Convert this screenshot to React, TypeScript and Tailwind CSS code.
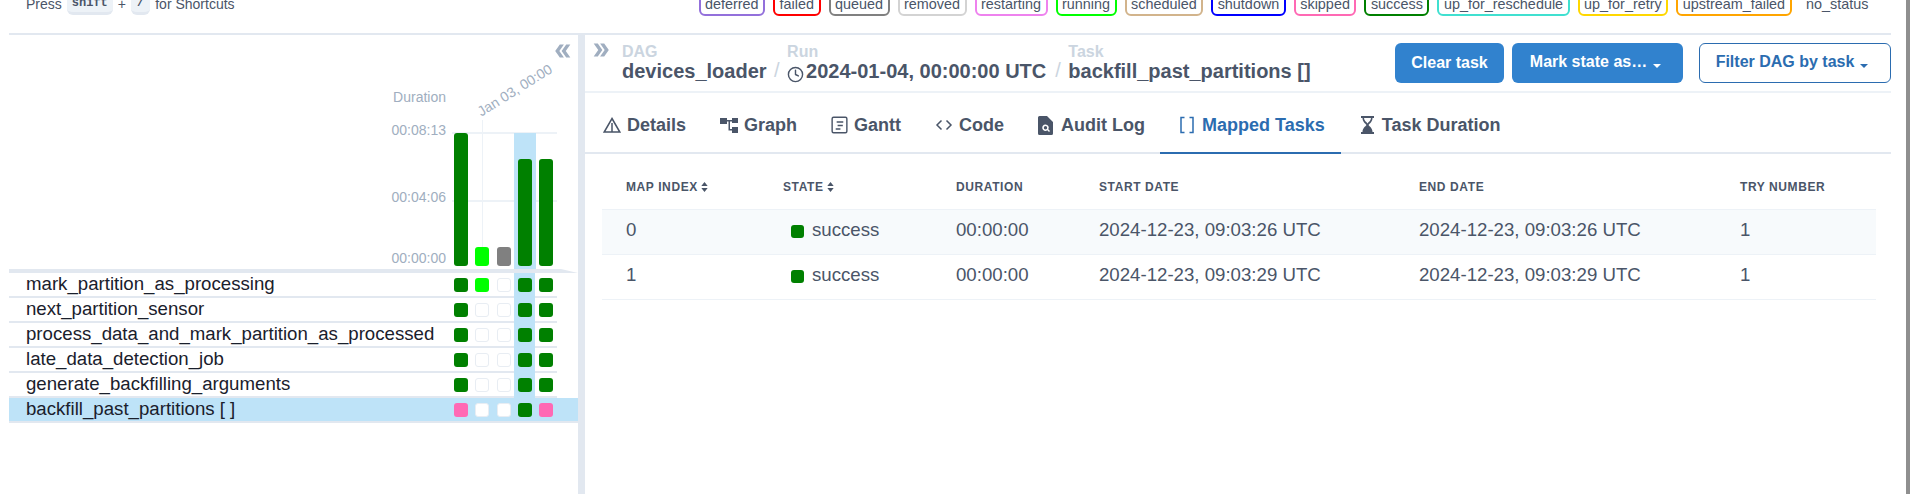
import React from "react";
import { MdDoubleArrow } from "react-icons/md";
import { FiClock } from "react-icons/fi";

const font = "font-['Liberation_Sans',Arial,sans-serif]";
const legend = [
  ["deferred", "border-[#9370db]"], ["failed", "border-[#ff0000]"], ["queued", "border-[#808080]"],
  ["removed", "border-[#d3d3d3]"], ["restarting", "border-[#ee82ee]"], ["running", "border-[#00ff00]"],
  ["scheduled", "border-[#d2b48c]"], ["shutdown", "border-[#0000ff]"], ["skipped", "border-[#ff69b4]"],
  ["success", "border-[#008000]"], ["up_for_reschedule", "border-[#40e0d0]"], ["up_for_retry", "border-[#ffd700]"],
  ["upstream_failed", "border-[#ffa500]"], ["no_status", "border-transparent"],
];
const G = "bg-[#008000]"; const L = "bg-[#00ff00]"; const E = "bg-white border border-[#e8edf3]"; const P = "bg-[#ff69b4]";
const rows: [string, string[]][] = [
  ["mark_partition_as_processing", [G, L, E, G, G]],
  ["next_partition_sensor", [G, E, E, G, G]],
  ["process_data_and_mark_partition_as_processed", [G, E, E, G, G]],
  ["late_data_detection_job", [G, E, E, G, G]],
  ["generate_backfilling_arguments", [G, E, E, G, G]],
  ["backfill_past_partitions [ ]", [P, E, E, G, P]],
];
const bars = [["h-[133px]", G], ["h-[19px]", L], ["h-[19px]", "bg-[#808080]"], ["h-[107px]", G], ["h-[107px]", G]];

function Caret() {
  return <span className="ml-[6px] inline-block w-0 h-0 border-x-[4px] border-x-transparent border-t-[4px] border-t-current translate-y-[1px]" />;
}
function Tab({ icon, label, active, cls }: { icon: React.ReactNode; label: string; active?: boolean; cls?: string }) {
  return (
    <div className={`flex items-center gap-[6px] h-[61px] pt-[5px] border-b-2 font-bold text-[18px] ${active ? "border-[#2b6cb0] text-[#2b6cb0]" : "border-transparent text-[#4a5568]"} ${cls ?? "px-4"}`}>
      {icon}
      <span>{label}</span>
    </div>
  );
}
function Crumb({ label, children }: { label: string; children: React.ReactNode }) {
  return (
    <div className="flex flex-col">
      <span className="text-base leading-[18px] font-bold text-[#cbd5e0] translate-y-[1px]">{label}</span>
      <span className="text-xl leading-[24px] font-bold text-[#4a5568] flex items-center -translate-y-[1px]">{children}</span>
    </div>
  );
}
function Sort() {
  return (
    <svg width="7" height="10" viewBox="0 0 7 11" className="inline-block ml-[3px] align-[-1px]" fill="#4a5568">
      <path d="M3.5 0 7 4.4H0zM3.5 11 0 6.6h7z" />
    </svg>
  );
}
const th = "px-6 pt-[11px] text-left text-xs font-bold tracking-[0.6px] text-[#4a5568] uppercase";
const td = "px-6 pb-[3px] text-[18.65px] text-[#4a5568]";
const kbd = "mx-[5px] h-[24px] pt-[3px] flex items-center rounded-md bg-[#edf2f7] border-b-[3px] border-[#e2e8f0] font-['Liberation_Mono',monospace] font-bold text-xs";

export default function App() {
  return (
    <div className={`${font} relative w-[1910px] h-[494px] overflow-hidden bg-white text-[#4a5568]`}>
      <div className="absolute right-0 top-0 w-[4px] h-[494px] bg-[#8f8f8f]" />
      <div className="mx-[9px] w-[1882px] h-[494px] flex flex-col">
        <div className="h-[33px] shrink-0 flex items-end justify-between pb-[17px] pl-[17px] pr-[16px]">
          <div className="flex items-center text-sm leading-5 mb-[1px]">
            <span className="translate-y-[1px]">Press</span>
            <kbd className={`${kbd} px-[5px]`}>shift</kbd>
            <span className="translate-y-[1px]">+</span>
            <kbd className={`${kbd} px-[6px]`}>/</kbd>
            <span className="translate-y-[1px]">for Shortcuts</span>
          </div>
          <div className="flex items-end gap-2">
            {legend.map(([t, c]) => (
              <div key={t} className={`h-[24px] pt-[1px] flex items-center px-[4.5px] border-2 rounded-md text-[14.4px] ${c}`}>{t}</div>
            ))}
          </div>
        </div>
        <div className="flex-1 flex border-t-2 border-[#e2e8f0] min-h-0">
          <div className="w-[569px] shrink-0 flex flex-col">
            <div className="relative h-[234px] shrink-0">
              <MdDoubleArrow className="absolute left-[543px] top-[5px] rotate-180 text-[#a0aec0]" size={22} />
              <div className="absolute right-[132px] top-[52px] text-sm text-[#a0aec0]">Duration</div>
              <div className="absolute right-[132px] top-[85px] text-sm text-[#a0aec0]">00:08:13</div>
              <div className="absolute right-[132px] top-[152px] text-sm text-[#a0aec0]">00:04:06</div>
              <div className="absolute right-[132px] top-[213px] text-sm text-[#a0aec0]">00:00:00</div>
              <div className="absolute left-[475px] top-[66px] text-sm text-[#a0aec0] -rotate-[32deg] origin-bottom-left whitespace-nowrap">Jan 03, 00:00</div>
              <div className="absolute left-[443px] top-[97px] w-[105px] h-[2px] bg-[#edf2f7]" />
              <div className="absolute left-[443px] top-[165px] w-[105px] h-[2px] bg-[#edf2f7]" />
              <div className="absolute left-[473px] top-[85px] w-px h-[146px] bg-[#edf2f7]" />
              <div className="absolute left-[505px] top-[98px] w-[22px] h-[136px] bg-[#bee3f8]" />
              <div className="absolute left-[445px] top-[98px] h-[133px] flex items-end gap-[7.3px]">
                {bars.map(([h, c], i) => (
                  <div key={i} className={`w-[14px] rounded-[3px] ${h} ${c}`} />
                ))}
              </div>
            </div>
            <div className="h-[4px] bg-[#e2e8f0] shrink-0 [clip-path:polygon(0_0,97%_0,100%_100%,0_100%)]" />
            {rows.map(([name, cells], r) => {
              const sel = r === rows.length - 1;
              return (
                <div key={name} className={`relative h-[25px] shrink-0 flex items-center border-b-2 border-[#e2e8f0] ${sel ? "bg-[#bee3f8]" : "mr-[21px]"}`}>
                  <span className="pl-[17px] text-[18.65px] leading-[20px] text-[#1a202c] -translate-y-[1px] w-[445px] whitespace-nowrap">{name}</span>
                  {!sel && <div className="absolute left-[505px] top-0 w-[21px] h-[25px] bg-[#bee3f8]" />}
                  <div className="relative flex gap-[7.3px]">
                    {cells.map((c, i) => (
                      <div key={i} className={`w-[14px] h-[14px] rounded-[3px] ${c}`} />
                    ))}
                  </div>
                </div>
              );
            })}
          </div>
          <div className="w-[7px] shrink-0 bg-[#e2e8f0] mt-[-2px]" />
          <div className="flex-1 min-w-0 flex flex-col">
            <div className="relative h-[58px] shrink-0 flex items-center justify-between border-b-2 border-[#edf2f7]">
              <MdDoubleArrow className="absolute left-[5px] top-[4px] text-[#a0aec0]" size={22} />
              <div className="flex items-center pl-[37px] gap-[7.5px]">
                <Crumb label="DAG">devices_loader</Crumb>
                <span className="text-xl text-[#cbd5e0] self-end">/</span>
                <Crumb label="Run"><FiClock size={17} className="mt-[7px] mr-[2px]" />2024-01-04, 00:00:00 UTC</Crumb>
                <span className="text-xl text-[#cbd5e0] self-end ml-[1.5px]">/</span>
                <Crumb label="Task">backfill_past_partitions []</Crumb>
              </div>
              <div className="flex items-center">
                <button className="h-10 w-[109px] bg-[#3182ce] text-white text-base font-bold rounded-md">Clear task</button>
                <button className="ml-2 h-10 w-[171px] bg-[#3182ce] text-white text-base font-bold rounded-md pb-[2px] pr-[4px]">Mark state as…<Caret /></button>
                <button className="ml-4 h-10 w-[192px] border border-[#2b6cb0] text-[#2b6cb0] text-base font-bold rounded-md pb-[2px] pr-[6px]">Filter DAG by task<Caret /></button>
              </div>
            </div>
            <div className="h-[61px] shrink-0 flex border-b-2 border-[#e2e8f0] pl-[2px] gap-[2px]">
              <Tab label="Details" icon={<svg width="18" height="18" viewBox="0 0 18 18" fill="none" stroke="currentColor" strokeWidth="1.5"><path d="M9 2.5 16.8 16H1.2zM9 7v9" /></svg>} />
              <Tab label="Graph" icon={<svg width="18" height="18" viewBox="0 0 18 18" fill="currentColor"><path d="M0 2h7v6H0zM12 2h6v5h-6zM12 11h6v6h-6zM7 4h5v1.5H10V13h2v1.5H8.5V5.5H7z" /></svg>} />
              <Tab label="Gantt" icon={<svg width="17" height="18" viewBox="0 0 18 18" fill="none" stroke="currentColor" strokeWidth="1.5" preserveAspectRatio="none"><rect x="1.2" y="1.2" width="15.6" height="15.6" rx="1.5" /><path d="M6 6h7M7 9.5h5.5M5 13h5" /></svg>} />
              <Tab label="Code" icon={<svg width="18" height="18" viewBox="0 0 18 18" fill="none" stroke="currentColor" strokeWidth="1.5"><path d="M6.5 4.5 2 9l4.5 4.5M11.5 4.5 16 9l-4.5 4.5" /></svg>} />
              <Tab label="Audit Log" cls="pl-4 pr-[13px]" icon={<svg width="15" height="19" viewBox="0 0 15 19" fill="currentColor" className="mr-[2px]"><path fillRule="evenodd" d="M1.5 0H9l6 6v11.5a1.5 1.5 0 0 1-1.5 1.5h-12A1.5 1.5 0 0 1 0 17.5v-16A1.5 1.5 0 0 1 1.5 0zM7.5 8.5a3.2 3.2 0 1 0 1.8 5.8l1.7 1.7 1-1-1.7-1.7a3.2 3.2 0 0 0-2.8-4.8zm0 1.5a1.7 1.7 0 1 1 0 3.4 1.7 1.7 0 0 1 0-3.4z" /></svg>} />
              <Tab label="Mapped Tasks" active cls="pl-[20px] pr-4" icon={<svg width="14" height="18" viewBox="0 0 14 18" fill="none" stroke="currentColor" strokeWidth="1.5" className="mr-[2px]"><path d="M4.500 1.500H1v15h3.500M9.500 1.500H13v15H9.500" /></svg>} />
              <Tab label="Task Duration" cls="pl-[18px] pr-4" icon={<svg width="13" height="18" viewBox="0 0 13 18" fill="currentColor" className="mr-[2px]"><path d="M0 0h13v2H11.5C11.5 6 8.5 7.500 7.500 9c1 1.500 4 3 4 7H13v2H0v-2h1.500c0-4 3-5.500 4-7-1-1.500-4-3-4-7H0zM3 2c0 2.500 2.500 4 3.500 5.500C7.500 6 10 4.500 10 2z" fillRule="evenodd" /></svg>} />
            </div>
            <div className="pl-[17px] pr-[15px]">
              <table className="w-[1274px] table-fixed border-collapse">
                <thead>
                  <tr className="h-[55px]">
                    <th className={`${th} w-[157px]`}>Map Index<Sort /></th>
                    <th className={`${th} w-[173px]`}>State<Sort /></th>
                    <th className={`${th} w-[143px]`}>Duration</th>
                    <th className={`${th} w-[320px]`}>Start Date</th>
                    <th className={`${th} w-[321px]`}>End Date</th>
                    <th className={`${th} w-[160px]`}>Try Number</th>
                  </tr>
                </thead>
                <tbody>
                  {[["0", "26"], ["1", "29"]].map(([i, s], n) => (
                    <tr key={i} className={`h-[45px] border-y border-[#edf2f7] ${n === 0 ? "bg-[#f7fafc]" : ""}`}>
                      <td className={td}>{i}</td>
                      <td className={td}>
                        <div className="flex items-center pl-2">
                          <div className="w-[13px] h-[13px] rounded-[3px] bg-[#008000] mr-2 translate-y-[2px]" />
                          success
                        </div>
                      </td>
                      <td className={td}>00:00:00</td>
                      <td className={td}>{`2024-12-23, 09:03:${s} UTC`}</td>
                      <td className={td}>{`2024-12-23, 09:03:${s} UTC`}</td>
                      <td className={td}>1</td>
                    </tr>
                  ))}
                </tbody>
              </table>
            </div>
          </div>
        </div>
      </div>
    </div>
  );
}
